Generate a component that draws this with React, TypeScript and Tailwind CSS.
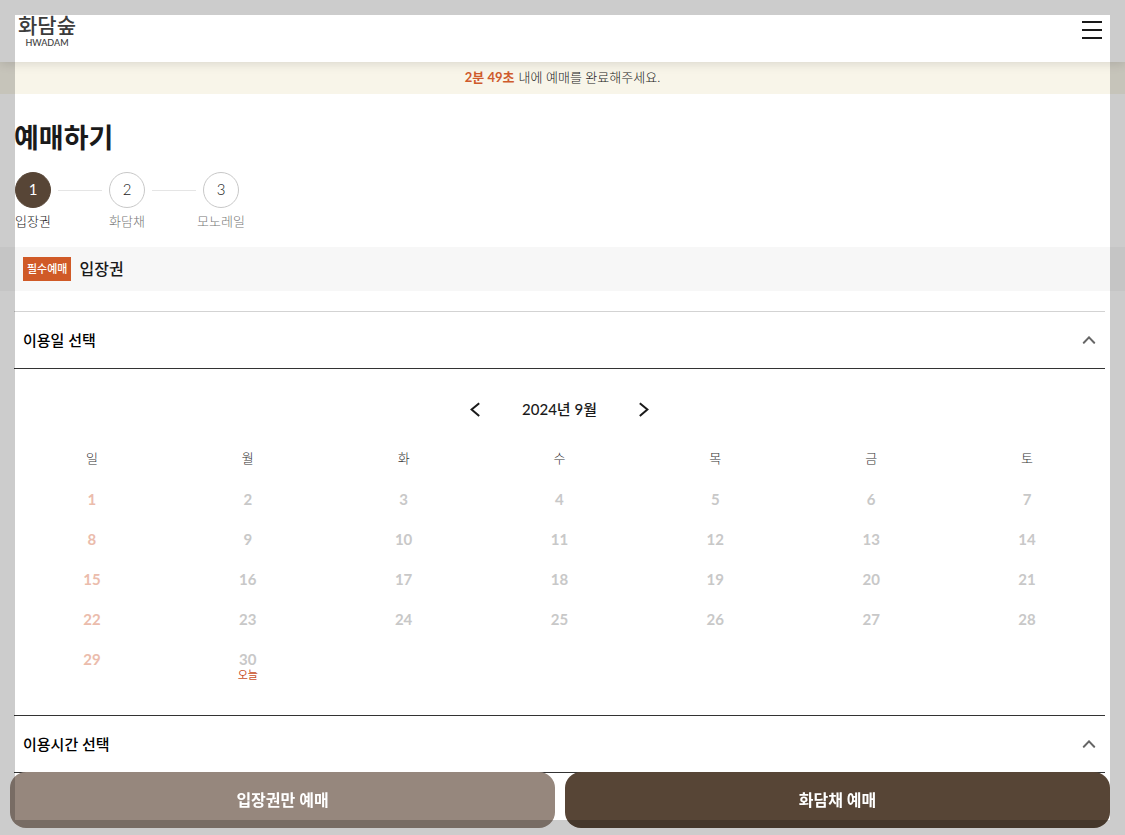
import type { ReactNode } from 'react';
import { useState } from 'react';
import clsx from 'clsx';

const weekdays = ['일', '월', '화', '수', '목', '금', '토'];

const weeks = [
  [1, 2, 3, 4, 5, 6, 7],
  [8, 9, 10, 11, 12, 13, 14],
  [15, 16, 17, 18, 19, 20, 21],
  [22, 23, 24, 25, 26, 27, 28],
  [29, 30, null, null, null, null, null],
];

const today = 30;

const steps = ['입장권', '화담채', '모노레일'];

function Header() {
  return (
    <header className="relative z-10 flex h-[62px] items-start justify-between bg-white pl-[18px] pr-[23px] pt-3 shadow-[0_2px_10px_rgba(0,0,0,0.12)]">
      <a href="#" className="flex flex-col items-center text-[#3c3c3c]">
        <span className="text-[21px] font-medium leading-[26px]">화담숲</span>
        <span className="text-[9px] font-medium leading-[10px]">HWADAM</span>
      </a>
      <button type="button" aria-label="메뉴" className="mt-[9px] flex w-5 flex-col gap-1.5">
        <span className="h-0.5 w-full bg-[#1a1a1a]" />
        <span className="h-0.5 w-full bg-[#1a1a1a]" />
        <span className="h-0.5 w-full bg-[#1a1a1a]" />
      </button>
    </header>
  );
}

function Steps() {
  return (
    <ol className="mt-3.5 flex pl-px">
      {steps.map((label, i) => (
        <li key={label} className="flex">
          {i > 0 && <span className="mx-[7px] mt-[18px] h-px w-11 bg-[#e5e5e5]" />}
          <div className="flex w-9 flex-col items-center">
            <span
              className={clsx(
                'flex size-9 items-center justify-center rounded-full border pb-0.5 text-[15px]',
                i === 0
                  ? 'border-[#574536] bg-[#574536] text-white'
                  : 'border-[#c8c8c8] bg-white font-light text-[#222]',
              )}
            >
              {i + 1}
            </span>
            <span
              className={clsx(
                'mt-[3px] whitespace-nowrap text-[13px] font-light leading-5',
                i === 0 ? 'text-[#222]' : 'text-[#777]',
              )}
            >
              {label}
            </span>
          </div>
        </li>
      ))}
    </ol>
  );
}

interface SectionProps {
  title: string;
  className: string;
  children?: ReactNode;
}

function Section({ title, className, children }: SectionProps) {
  const [open, setOpen] = useState(true);

  return (
    <section className={clsx('border-t', className)}>
      <button
        type="button"
        aria-expanded={open}
        onClick={() => setOpen(!open)}
        className="flex h-[57px] w-full items-center justify-between border-b border-[#333] pl-[9px] pr-[9px] text-[15px] font-medium text-black"
      >
        {title}
        <svg
          viewBox="0 0 14 8"
          className={clsx('h-2 w-3.5', !open && 'rotate-180')}
          fill="none"
          stroke="#666"
          strokeWidth="2"
          strokeLinecap="round"
        >
          <path d="M1.8 6.8 7 1.4l5.2 5.4" />
        </svg>
      </button>
      {open && children}
    </section>
  );
}

function Calendar() {
  return (
    <div className="pb-9 pt-6">
      <div className="mb-3.5 flex h-8 items-center justify-center gap-[42px] text-[#1a1a1a]">
        <button type="button" aria-label="이전 달">
          <svg viewBox="0 0 10 16" className="h-4 w-2.5" fill="none" stroke="currentColor" strokeWidth="2">
            <path d="M9.2 2.2 1.6 8.6l7.6 6.4" />
          </svg>
        </button>
        <h2 className="text-[15px] font-medium">2024년 9월</h2>
        <button type="button" aria-label="다음 달">
          <svg viewBox="0 0 10 16" className="h-4 w-2.5" fill="none" stroke="currentColor" strokeWidth="2">
            <path d="M0.8 2.2 8.4 8.6l-7.6 6.4" />
          </svg>
        </button>
      </div>
      <table className="w-full table-fixed text-center">
        <thead>
          <tr className="h-10">
            {weekdays.map(day => (
              <th key={day} scope="col" className="p-0 text-[13px] font-light text-[#333]">
                {day}
              </th>
            ))}
          </tr>
        </thead>
        <tbody>
          {weeks.map((week, row) => (
            <tr key={row} className="h-10">
              {week.map((date, col) => (
                <td
                  key={col}
                  className={clsx(
                    'p-0 text-[15px] font-bold leading-5',
                    col === 0 ? 'text-[#ebbcac]' : 'text-[#c8c8c8]',
                  )}
                >
                  <div className="relative">
                    {date}
                    {date === today && (
                      <span className="absolute inset-x-0 top-[18px] text-[11px] font-normal leading-4 text-[#c9502a]">
                        오늘
                      </span>
                    )}
                  </div>
                </td>
              ))}
            </tr>
          ))}
        </tbody>
      </table>
    </div>
  );
}

export default function App() {
  return (
    <div className="bg-white pb-14 font-[Lato,'Noto_Sans_CJK_KR',sans-serif] text-[#1a1a1a]">
      <Header />
      <p className="flex h-8 items-center justify-center gap-1 bg-[#f8f5e9] text-[13px] font-light text-[#222]">
        <strong className="font-bold text-[#cf5b2c]">2분 49초</strong>
        내에 예매를 완료해주세요.
      </p>

      <main>
        <div className="pl-3.5 pt-6">
          <h1 className="text-[27px] font-bold leading-10">예매하기</h1>
          <Steps />
        </div>

        <div className="mt-4 flex h-11 items-center gap-2 bg-[#f7f7f7] pl-[23px]">
          <span className="flex h-6 items-center bg-[#d05a27] px-1 text-[11px] font-medium text-white">
            필수예매
          </span>
          <span className="text-base font-medium">입장권</span>
        </div>

        <div className="ml-3.5 mr-5 mt-5">
          <Section title="이용일 선택" className="border-[#d3d3d3]">
            <Calendar />
          </Section>
          <Section title="이용시간 선택" className="border-[#333]" />
        </div>
      </main>

      <div className="fixed bottom-[7px] left-2.5 right-[15px] z-20 grid grid-cols-2 gap-2.5">
        <button type="button" className="h-14 rounded-2xl bg-[#96877d] text-base font-bold text-white">
          입장권만 예매
        </button>
        <button type="button" className="h-14 rounded-2xl bg-[#574536] text-base font-bold text-white">
          화담채 예매
        </button>
      </div>

      {/* dimmed frame around the viewport */}
      <div className="pointer-events-none fixed inset-0 z-30 border-[15px] border-black/20" />
    </div>
  );
}
